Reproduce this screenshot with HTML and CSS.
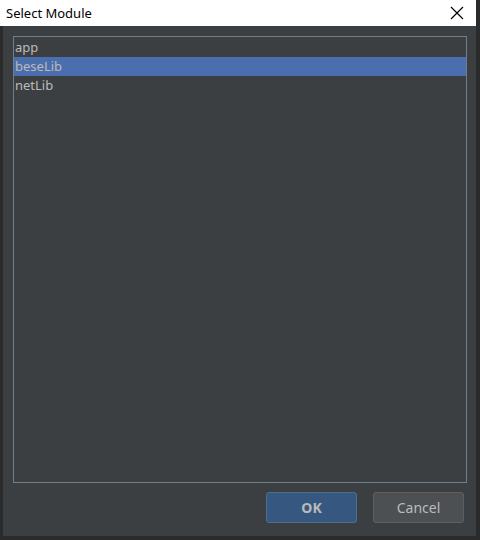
FILE: index.html
```html
<!DOCTYPE html>
<html>
<head>
<meta charset="utf-8">
<link rel="stylesheet" href="styles.css">
</head>
<body>
<div class="dialog">
  <div class="titlebar">
    <span class="title">Select Module</span>
    <svg class="close" width="14" height="14" viewBox="0 0 14 14"><path d="M1 1L13 13M13 1L1 13" stroke="#000" stroke-width="1.2"/></svg>
  </div>
  <div class="content">
    <div class="list">
      <div class="item">app</div>
      <div class="item selected">beseLib</div>
      <div class="item">netLib</div>
    </div>
    <div class="buttons">
      <button class="btn ok">OK</button>
      <button class="btn cancel">Cancel</button>
    </div>
  </div>
</div>
</body>
</html>
```
FILE: styles.css
```css
html, body { margin: 0; padding: 0; }
body {
  width: 480px;
  height: 540px;
  background: #2b2b2b;
  font-family: "Noto Sans", "Noto Sans CJK SC", sans-serif;
  overflow: hidden;
}
.dialog {
  width: 476px;
  height: 536px;
  display: flex;
  flex-direction: column;
}
.titlebar {
  height: 26px;
  background: #ffffff;
  display: flex;
  align-items: center;
  justify-content: space-between;
  padding: 0 12px 0 6px;
}
.title { font-size: 13px; color: #000; }
.close { display: block; }
.content {
  flex: 1;
  margin-left: 3px;
  background: #3c3f41;
  padding: 10px 9px 13px 10px;
  display: flex;
  flex-direction: column;
}
.list {
  flex: 1;
  border: 1px solid #6f7e8b;
  padding: 1px 0;
}
.item {
  height: 19px;
  line-height: 19px;
  font-size: 13px;
  color: #bbbbbb;
  padding-left: 1px;
}
.item.selected { background: #4b6eaf; }
.buttons {
  display: flex;
  justify-content: flex-end;
  gap: 16px;
  margin-top: 9px;
  padding-right: 3px;
}
.btn {
  width: 91px;
  height: 31px;
  border-radius: 3px;
  font-family: "Noto Sans", sans-serif;
  font-size: 14px;
  color: #bbbbbb;
}
.ok {
  background: #365880;
  border: 1px solid #4c708c;
  font-weight: bold;
}
.cancel {
  background: #4c5052;
  border: 1px solid #5e6060;
}
```
